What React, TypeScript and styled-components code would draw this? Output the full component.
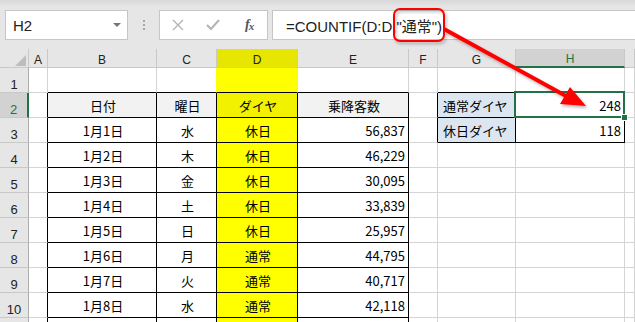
import styled, { createGlobalStyle } from "styled-components";

const GlobalStyle = createGlobalStyle`
  html, body {
    margin: 0;
    padding: 0;
    background: #fff;
    overflow: hidden;
  }
`;

const GRID = "#d4d4d4";
const INK = "#000";
const GREEN = "#217346";
const YELLOW = "#ffff00";

const Page = styled.div`
  position: relative;
  width: 635px;
  height: 322px;
  overflow: hidden;
  background: #fff;
  font-family: "Noto Sans CJK JP", sans-serif;
`;

const FormulaBar = styled.div`
  display: flex;
  align-items: flex-start;
  height: 49px;
  box-sizing: border-box;
  padding: 10px 0 0 5px;
  background: linear-gradient(#d8d8d8 0, #e6e6e6 7px, #e6e6e6 100%);
`;

const NameBox = styled.div`
  display: flex;
  align-items: center;
  justify-content: space-between;
  width: 123px;
  height: 30px;
  box-sizing: border-box;
  padding: 0 6px 0 7px;
  background: #fff;
  border: 1px solid #c6c6c6;
  font: 15px "Liberation Sans", sans-serif;
  color: #222;
`;

const DropArrow = styled.span`
  width: 0;
  height: 0;
  border-left: 4px solid transparent;
  border-right: 4px solid transparent;
  border-top: 4px solid #777;
`;

const Grip = styled.div`
  display: flex;
  flex-direction: column;
  align-items: center;
  gap: 2px;
  width: 31px;
  padding-top: 10px;

  span {
    width: 2px;
    height: 2px;
    background: #a6a6a6;
  }
`;

const ButtonBox = styled.div`
  display: grid;
  grid-template-columns: repeat(3, 1fr);
  width: 109px;
  height: 30px;
  box-sizing: border-box;
  background: #fff;
  border: 1px solid #c6c6c6;
`;

const BarButton = styled.div`
  display: flex;
  align-items: center;
  justify-content: center;
`;

const Fx = styled.span`
  font: italic bold 14px "Liberation Serif", serif;
  color: #555;
  letter-spacing: -1px;

  sub {
    font-size: 11px;
    vertical-align: -1px;
  }
`;

const FormulaInput = styled.div`
  flex: 1;
  display: flex;
  align-items: center;
  height: 30px;
  margin-left: 4px;
  box-sizing: border-box;
  padding-left: 13px;
  background: #fff;
  border: 1px solid #c6c6c6;
  border-right: none;
  font: 15px "Liberation Sans", "Noto Sans CJK JP", sans-serif;
  color: #222;
  white-space: nowrap;
`;

const Sheet = styled.div`
  display: grid;
  grid-template-columns: 29px 19px 109px 60px 81px 111px 29px 78px 109px 1fr;
  grid-template-rows: 19px repeat(11, 25px);
`;

const Corner = styled.div`
  display: flex;
  align-items: flex-end;
  justify-content: flex-end;
  padding: 0 2px 1px 0;
  background: #e6e6e6;
  border-right: 1px solid #c8c8c8;
  border-bottom: 1px solid #c8c8c8;

  span {
    width: 0;
    height: 0;
    border-left: 11px solid transparent;
    border-bottom: 11px solid #bdbdbd;
  }
`;

const ColHeader = styled.div<{ $selected?: boolean; $tint?: string }>`
  display: flex;
  align-items: center;
  justify-content: center;
  box-sizing: border-box;
  padding-top: 3px;
  background: ${(p) => (p.$selected ? "#d2d2d2" : p.$tint ?? "#e6e6e6")};
  border-right: 1px solid #c8c8c8;
  border-bottom: ${(p) => (p.$selected ? `2px solid ${GREEN}` : "1px solid #c8c8c8")};
  color: ${(p) => (p.$selected ? GREEN : "#222")};
  font: 12px "Liberation Sans", sans-serif;
`;

const RowHeader = styled.div<{ $selected?: boolean }>`
  display: flex;
  align-items: flex-end;
  justify-content: center;
  box-sizing: border-box;
  background: ${(p) => (p.$selected ? "#d2d2d2" : "#e6e6e6")};
  border-right: ${(p) => (p.$selected ? `2px solid ${GREEN}` : "1px solid #ababab")};
  border-bottom: 1px solid #c8c8c8;
  color: ${(p) => (p.$selected ? GREEN : "#222")};
  font: 13px/12px "Liberation Sans", sans-serif;
  padding-bottom: 1px;
`;

const Cell = styled.div<{
  $align: "left" | "center" | "right";
  $bg: string;
  $right: string;
  $bottom: string;
}>`
  position: relative;
  display: flex;
  align-items: center;
  justify-content: ${(p) =>
    p.$align === "left" ? "flex-start" : p.$align === "right" ? "flex-end" : "center"};
  box-sizing: border-box;
  padding: 0 3px 0 5px;
  background: ${(p) => p.$bg};
  border-right: 1px solid ${(p) => p.$right};
  border-bottom: 1px solid ${(p) => p.$bottom};
  font-size: 13px;
  line-height: 1;
  color: #000;
  white-space: nowrap;
`;

const Selection = styled.div`
  position: absolute;
  top: -2px;
  left: -2px;
  right: -1px;
  bottom: -1px;
  border: 2px solid ${GREEN};
  z-index: 2;

  &::after {
    content: "";
    position: absolute;
    right: -5px;
    bottom: -5px;
    width: 5px;
    height: 5px;
    background: ${GREEN};
    border: 1px solid #fff;
  }
`;

const Annotation = styled.svg`
  position: absolute;
  top: 0;
  left: 0;
  pointer-events: none;
  z-index: 5;
`;

const LETTERS = ["A", "B", "C", "D", "E", "F", "G", "H", ""];

const DATA: Record<number, string[]> = {
  2: ["", "日付", "曜日", "ダイヤ", "乗降客数", "", "通常ダイヤ", "248", ""],
  3: ["", "1月1日", "水", "休日", "56,837", "", "休日ダイヤ", "118", ""],
  4: ["", "1月2日", "木", "休日", "46,229", "", "", "", ""],
  5: ["", "1月3日", "金", "休日", "30,095", "", "", "", ""],
  6: ["", "1月4日", "土", "休日", "33,839", "", "", "", ""],
  7: ["", "1月5日", "日", "休日", "25,957", "", "", "", ""],
  8: ["", "1月6日", "月", "通常", "44,795", "", "", "", ""],
  9: ["", "1月7日", "火", "通常", "40,717", "", "", "", ""],
  10: ["", "1月8日", "水", "通常", "42,118", "", "", "", ""],
};

// row 11 only peeks in at the bottom edge, its number is not visible
const ROWS = Array.from({ length: 11 }, (_, i) => i + 1);

function fill(r: number, c: number): string | null {
  if (c === 3) return r === 2 ? "#f2f200" : YELLOW;
  if (r === 2 && (c === 1 || c === 2 || c === 4)) return "#f2f2f2";
  if (c === 6 && (r === 2 || r === 3)) return "#dce6f1";
  return null;
}

function rightEdge(r: number, c: number): string {
  if (r >= 2 && c <= 4) return INK;
  if ((r === 2 || r === 3) && c >= 5 && c <= 7) return INK;
  return fill(r, c) ?? fill(r, c + 1) ?? GRID;
}

function bottomEdge(r: number, c: number): string {
  if (r >= 1 && c >= 1 && c <= 4) return INK;
  if (r >= 1 && r <= 3 && (c === 6 || c === 7)) return INK;
  return fill(r, c) ?? fill(r + 1, c) ?? GRID;
}

function alignOf(r: number, c: number): "left" | "center" | "right" {
  if (c === 6) return "left";
  if (c === 7) return "right";
  if (c === 4 && r !== 2) return "right";
  return "center";
}

function App() {
  return (
    <Page>
      <GlobalStyle />
      <FormulaBar>
        <NameBox>
          H2
          <DropArrow />
        </NameBox>
        <Grip>
          <span />
          <span />
          <span />
        </Grip>
        <ButtonBox>
          <BarButton>
            <svg width="12" height="12" viewBox="0 0 12 12">
              <path d="M1 1 L11 11 M11 1 L1 11" stroke="#b4b4b4" strokeWidth="1.4" />
            </svg>
          </BarButton>
          <BarButton>
            <svg width="14" height="12" viewBox="0 0 14 12">
              <path d="M1 6 L5 10 L13 1" stroke="#b4b4b4" strokeWidth="2" fill="none" />
            </svg>
          </BarButton>
          <BarButton>
            <Fx>
              f<sub>x</sub>
            </Fx>
          </BarButton>
        </ButtonBox>
        <FormulaInput>=COUNTIF(D:D,"通常")</FormulaInput>
      </FormulaBar>

      <Sheet>
        <Corner>
          <span />
        </Corner>
        {LETTERS.map((l, c) => (
          <ColHeader key={c} $selected={c === 7} $tint={c === 3 ? "#e6e600" : undefined}>
            {l}
          </ColHeader>
        ))}
        {ROWS.map((r) => [
          <RowHeader key={`h${r}`} $selected={r === 2}>
            {r <= 10 ? r : ""}
          </RowHeader>,
          ...LETTERS.map((_, c) => (
            <Cell
              key={`${r}-${c}`}
              $align={alignOf(r, c)}
              $bg={fill(r, c) ?? "#fff"}
              $right={rightEdge(r, c)}
              $bottom={bottomEdge(r, c)}
            >
              {DATA[r]?.[c] ?? ""}
              {r === 2 && c === 7 && <Selection />}
            </Cell>
          )),
        ])}
      </Sheet>

      <Annotation width="635" height="322" viewBox="0 0 635 322">
        <defs>
          <filter id="shade" x="-10%" y="-10%" width="130%" height="130%">
            <feDropShadow dx="1.5" dy="2" stdDeviation="1.5" floodColor="#000" floodOpacity="0.3" />
          </filter>
        </defs>
        <g filter="url(#shade)">
          <rect x="394" y="9" width="50" height="32" rx="6" fill="none" stroke="#ff0000" strokeWidth="2" />
          <line x1="444" y1="29" x2="566" y2="96" stroke="#ff0000" strokeWidth="4" />
          <polygon points="586,106 570,87 560,104" fill="#ff0000" />
        </g>
      </Annotation>
    </Page>
  );
}

export default App;
